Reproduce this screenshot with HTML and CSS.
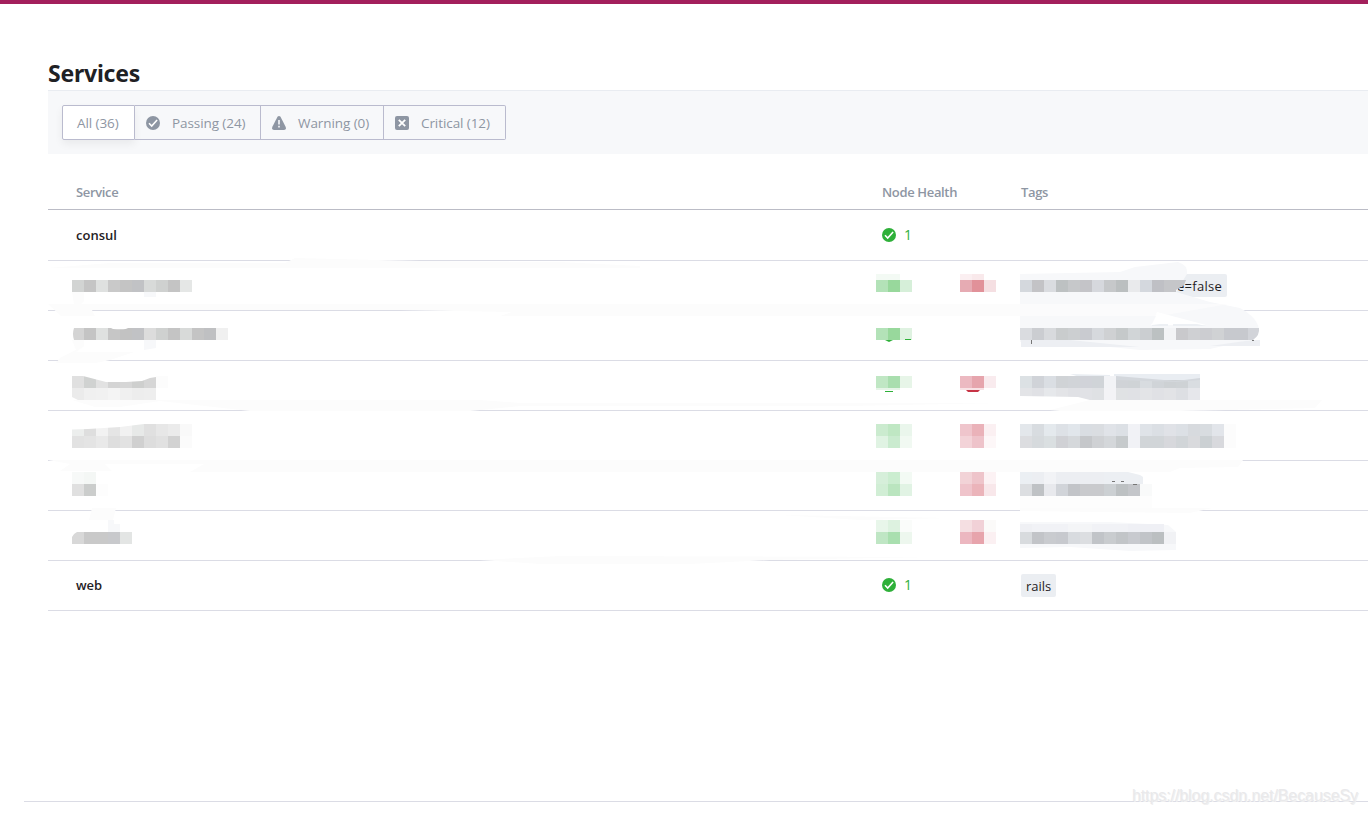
FILE: index.html
```
<!DOCTYPE html>
<html lang="en">
<head>
<meta charset="utf-8">
<title>Services</title>
<link rel="stylesheet" href="styles.css">
</head>
<body>
<svg class="symbols" aria-hidden="true">
  <symbol id="check" viewBox="0 0 14 14"><circle cx="7" cy="7" r="7" fill="currentColor"/><path d="M3 7.2l2.7 2.8 5.4-6" fill="none" stroke="#fff" stroke-width="1.6"/></symbol>
  <symbol id="warn" viewBox="0 0 14 14"><path d="M5.500.8Q7-.8 8.500.8L13.600 10.800Q14.600 14 12 14H2Q-.6 14 .4 10.800Z" fill="currentColor"/><path d="M7 4v4.500M7 9.800v1.700" stroke="#f7f8fa" stroke-width="1.6"/></symbol>
  <symbol id="cross" viewBox="0 0 14 14"><rect width="14" height="14" rx="2" fill="currentColor"/><path d="M3.8 3.8l6.4 6.4M10.2 3.8l-6.4 6.4" stroke="#fff" stroke-width="1.8"/></symbol>
</svg>
<main class="page">
  <h1 class="title"><span>Services</span></h1>
  <div class="filters">
    <div class="group">
      <button class="filter all"><span>All (36)</span></button>
      <button class="filter passing"><svg class="icon"><use href="#check"/></svg><span>Passing (24)</span></button>
      <button class="filter warning"><svg class="icon"><use href="#warn"/></svg><span>Warning (0)</span></button>
      <button class="filter critical"><svg class="icon"><use href="#cross"/></svg><span>Critical (12)</span></button>
    </div>
  </div>
  <div class="table">
    <div class="row head"><span><b>Service</b></span><span><b>Node Health</b></span><span><b>Tags</b></span></div>
    <div class="row first"><span class="name"><b>consul</b></span><span class="health"><svg class="icon"><use href="#check"/></svg>1</span><span></span></div>
    <div class="row"><span></span><span></span><span class="cut"><i class="tag cut-tag">e=false</i></span></div>
    <div class="row"></div>
    <div class="row"></div>
    <div class="row"></div>
    <div class="row"></div>
    <div class="row"></div>
    <div class="row last"><span class="name"><b>web</b></span><span class="health"><svg class="icon"><use href="#check"/></svg>1</span><span><i class="tag rails">rails</i></span></div>
  </div>
  <footer class="footer"></footer>
</main>
<svg class="redaction" viewBox="0 0 1368 814" aria-hidden="true">
  <g fill="#fcfcfc">
    <path d="M48 268L110 263H285L295 258 420 261 560 262 640 266V268Z"/>
    <path d="M72 292H84V301L81 304H1020V316H500L512 312 400 310H92L95 316H61L48 304H74Z"/>
    <path d="M84 340V346L76 352H134L110 360 96 363H56L60 358 76 350 72 340Z"/>
    <path d="M72 400H480L520 403H1000L850 406H520L470 411 250 411 160 401 120 407H95L72 400Z"/>
    <path d="M48 460H1243L1238 467 1180 468 1170 472H190L204 464H105L112 471H60L70 464Z"/>
    <path d="M92 508H116L113 520H89Z"/>
    <path d="M780 515L950 518 860 520Z"/>
    <path d="M480 560L560 556 930 557 770 560 690 564H540Z"/>
    <path d="M1050 410L1090 400H1322L1315 408 1180 411H1060Z"/>
    <path d="M1020 508H1212L1190 513 1100 512 1020 511Z"/>
  </g>
  <g fill="#f7f8fa">
    <path d="M1020 274L1120 272 1135 267 1178 262Q1188 265 1187 274L1176 292 1210 302 1240 308Q1258 318 1259 330L1252 340 1020 340Z"/>
    <path d="M1020 340H1250L1210 349 1140 350 1090 345 1020 342Z"/>
    <path d="M1020 522L1110 522 1168 525 1176 532V550L1130 551 1070 547 1020 548Z"/>
    <path d="M1020 496H1152V508H1020Z" fill="#fdfdfd"/>
    <path d="M144 292h12v5h-12zM144 340h12v8l-12 2zM108 520h6v4h6v8h-12z"/>
  </g>
  <path d="M1020 304H1228L1160 316H1020Z" fill="#fbfbfc"/>
  <path d="M1157 312L1206 325H1020V324H1152Z" fill="#fff"/>
  <path d="M1020 316H1156L1151 325 1147 328H1020Z" fill="#f7f8fa"/>
  <path d="M1021 340H1070L1140 347H1021ZM1252 330H1260V346H1210L1252 340Z" fill="#edeff3"/>
  <path d="M1031.500 340v4M1252 340.500h2" stroke="#777" stroke-width="1"/>
  <path d="M1152 325l8-1h8v2h-16zM1173 324h24l9 2h-33z" fill="#edf0f4"/>
  <path d="M885 340h8l-4 2z" fill="#2eb039"/>
  <path d="M885 391h8v1h-8z" fill="#2eb039"/>
  <path d="M876 388h24v2h-24z" fill="#e6f4e7"/><path d="M960 388h24v2h-24z" fill="#f8e2e5"/>
  <path d="M966 390h14l-2 2h-10z" fill="#c73445"/>
  <path d="M1114 374h86v6l-24 2-62-5zM1070 374l40 1v2h-30z" fill="#e9edf2"/>
  <path d="M1104 472h24l12 3 3 2v8h-39z" fill="#eceff3"/>
  <g id="mosaic" shape-rendering="crispEdges"></g>
  <path d="M905 339h6v1h-6z" fill="#2eb039"/>
  <path d="M1116 376l24 2 36 3 24-3v2l-24 2-60 -2z" fill="#d3d7dc"/>
  <path d="M1176 280h10l-2 5-8 5z" fill="#c5c6c9"/>
  <g fill="#fff">
    <path d="M72 328h2q-2 6 0 12h-2zM111 328h17q-2 2-15 1zM83 376h73v1l-6 1-8 3-16 1H106zM72 424h72l-24 3-32 2-16 .5zM72 532h5q-4 2-5 5z"/>
    <path d="M72 397l6 3h-6zM1020 396l58 1 12 3h-70z"/>
    <path d="M1260 328h-1q1 7-6 12h7z"/>
  </g>
  <path d="M1112 481.500h3M1121 481.500h3M1133 484.500h4" stroke="#777" stroke-width="1"/>
</svg>
<div class="watermark">https://blog.csdn.net/BecauseSy</div>
<script src="mosaic.js"></script>
</body>
</html>
```
FILE: styles.css
```
body { margin: 0; background: #fff; font: 13px "Open Sans", "Noto Sans", sans-serif; color: #1f2124; overflow: hidden; }
.page { height: 814px; box-sizing: border-box; border-top: 4px solid #a3205c; padding: 52px 0 0 48px; display: flex; flex-direction: column; }
.symbols { display: none; }
.title { margin: 0; height: 34px; font: bold 23px/35px "Noto Sans", sans-serif; letter-spacing: -.22px; }
.filters { height: 64px; box-sizing: border-box; border-top: 1px solid #e9ecf1; background: #f7f8fa; padding: 14px; }
.group { display: flex; }
.filter { box-sizing: border-box; height: 35px; margin: 0; padding: 0 0 0 11px; border: 1px solid #babbce; border-left: 0; background: none; color: #8e96a3; font: 13.5px/33px "Open Sans", sans-serif; letter-spacing: -.08px; display: flex; align-items: center; white-space: nowrap; gap: 12px; }
.filter span { padding-top: 1px; }
.all { width: 73px; border-left: 1px solid #babbce; border-radius: 2px 0 0 2px; background: #fff; padding-left: 14px; box-shadow: 0 4px 8px rgba(0,0,0,.06); }
.passing { width: 126px; }
.warning { width: 123px; }
.critical { width: 122px; border-radius: 0 2px 2px 0; }
.icon { width: 14px; height: 14px; flex: none; }
.table { padding-top: 20px; }
.row { height: 50px; box-sizing: border-box; border-bottom: 1px solid #dbdce5; display: grid; grid-template-columns: 806px 139px 1fr; padding-left: 28px; align-items: center; }
.row b { font-weight: 600; }
.head { height: 36px; border-color: #bbbcc6; color: #8e96a3; padding-top: 1px; letter-spacing: -.35px; }
.first { height: 51px; }
.last { padding-bottom: 1px; }
.health { display: flex; align-items: center; gap: 8px; color: #2eb039; font-size: 14px; line-height: 18px; }
.tag { display: inline-block; box-sizing: border-box; height: 23px; padding: 0 5px; font-style: normal; line-height: 24px; background: #ebeef2; border-radius: 2px; position: relative; top: 1px; }
.cut { padding: 0 0 2px 151px; }
.rails { width: 35px; top: 0; }
.cut-tag { width: 55px; letter-spacing: .3px; }
.footer { border-top: 1px solid #dbdce5; margin: 190px 0 0 -24px; }
.redaction { position: absolute; left: 0; top: 0; width: 1368px; height: 814px; }
.watermark { position: absolute; right: 10px; bottom: 9px; font: 16px/18px "Liberation Sans", sans-serif; letter-spacing: -.08px; color: #e9e9eb; text-shadow: 1px 1px 0 #f0f0f0; }
```
FILE: mosaic.js
```
// Each strip: x, y, height, then one colour per 12px cell.
const strips = [
  "72 280 12 d2d4d3 c5c5c5 dfe1e0 c9c9c9 c4c4c4 c1c2c5 d8dad9 cfd1d0 c4c4c4 e5e7e6",
  "72 328 12 d4d4d4 c4c4c4 dfe1e0 c6c6c6 c2c2c2 c1c2c5 dcdcdc cfd1d0 c4c4c4 d8dad9 c4c4c4 bfc0c2 f0f0f0",
  "72 376 12 e0e0e0 d0d2d1 e2e2e2 d4d4d4 d6d6d6 cecfce d6d6d6 fcfcfc",
  "72 388 12 ebebeb f0f0f0 f1f1f1 f4f4f4 f0f0f0 ededed eeeeee",
  "72 424 12 eceeed dedede f2f2f2 e5e5e5 f1f1f1 e7e9e8 e0e0e0 e7e7e7 ebebeb f9f9f9",
  "72 436 12 e2e2e2 e4e4e4 e9e9e9 dedede e2e2e2 d0d0d0 dddddd e1e1e1 d2d2d2 fbfbfb",
  "72 472 12 f7f9f8 f4f7f5",
  "72 484 12 e0e0e0 cbcdcc fdfdfd",
  "72 532 12 d8d8d8 c9c9c9 c9c9c9 c8c9cc e3e5e4",
  "876 274 6 f3faf4 f3faf4",
  "876 280 12 b3e2b8 98d89c d6efd9",
  "876 328 12 b3e2b8 98d89c dff2e1",
  "876 376 12 c0e7c4 a9deae e7f5e8",
  "876 424 12 cbebcf bfe7c3 eaf6ec",
  "876 436 12 e0f3e3 caebcf f1f9f2",
  "876 472 12 d6efda cbedd0 f3faf4",
  "876 484 12 d1eed5 bae5bf e1f3e4",
  "876 520 12 e8f6ea ddf2e0 fafcfa",
  "876 532 12 bfe6c4 a9dfaf edf7ee",
  "960 274 6 fbeff1 f9e9eb",
  "960 280 12 e6abb3 e19199 f5dfe2",
  "960 376 12 ecb9c1 e6a5ad f9ebee",
  "960 424 12 efc5cc eab2b9 fbf0f2",
  "960 436 12 f3d3d8 eec3ca fdf7f8",
  "960 472 12 f2d3d7 eec4ca fcf2f4",
  "960 484 12 efc4cb ebb4ba f8e7ea",
  "960 520 12 f5dfe2 f1d1d7 fbfaf9",
  "960 532 12 ecb7c0 e7a4ac fbf0f2",
  "1020 280 12 d4d8dd c3c3c6 dadce0 bdc1c2 c6c8ca c4c4c8 d6d8dd c6c8ca bbbfc0 e9eaec d4d8de bfc0c5 c5c6c9",
  "1020 328 12 dadce0 cbcdd1 d8dadd c9cccd cccfd1 c9cbd0 d6d9dd cfd1d3 c5c9ca d1d5d7 cbced1 bcc1c2 f3f4f6 c9c9cc cfd0d3 cccdd1 d0d2d4 c7c9ce c7c9ce d2d4d9",
  "1020 376 12 dce1e4 d0d3d8 dadee3 d0d3d6 d1d4d8 d1d3d9 d0d4d8 f2f3f6",
  "1116 380 8 d0d3d7 cfd3d6 d8dce0 d0d4d8 cdd1d4 ced2d5 d9dde1",
  "1020 388 12 e3e4e7 e0e1e5 e6e8eb e3e4e7 e0e1e5 e1e2e6 dfe1e4 f3f3f6 e0e2e4 e0e1e5 e3e4e7 e0e1e5 e2e3e6 dddfe3 e6e7eb",
  "1020 424 12 e3e7eb d8dce0 e4e9ed dde1e6 e1e6eb d9dde2 dadde1 e0e3e8 dce0e5 f1f2f6 dfe3e8 dbdfe4 e0e2e7 dce0e5 d7dade d8dce0 e2e5ea fcfcfc",
  "1020 436 12 dcdde0 d6dadd dadfe1 d0d1d5 d5d8db c5c7ca cfd1d4 d4d7da c6cacc f1f2f6 d1d5d8 d1d5d8 d7d8dc d1d5d8 d9dadd cbd0d3 d8d9dd fcfcfc",
  "1020 472 12 ebeff3 eceef2 f2f3f6 eceef2 eceef2 eceef2 eceef2",
  "1020 484 12 dcdee1 bfc2c5 e8e9ed d1d4d9 c2c4c8 c9cacd c9cacd ccd0d3 bdc1c3 c4c6ca f9fafa",
  "1020 524 8 eff0f4 f1f2f6 f1f2f6 f1f2f6 f4f5f7 f4f5f7 f1f2f6 f1f2f6 f1f2f6 eff0f5 eff0f5 eff0f5",
  "1020 532 12 d8dbde c2c4c8 c9cbcf c7c9ce d8dbdf dcdee1 c1c4c8 c9cccf c2c5c8 c8cacf c1c4c8 bbbfc1 f1f2f5"
];
const layer = document.getElementById("mosaic");
for (const strip of strips) {
  const [x, y, h, ...cells] = strip.split(" ");
  cells.forEach((colour, i) => {
    const r = document.createElementNS("http://www.w3.org/2000/svg", "rect");
    r.setAttribute("x", +x + i * 12);
    r.setAttribute("y", y);
    r.setAttribute("width", 12);
    r.setAttribute("height", h);
    r.setAttribute("fill", "#" + colour);
    layer.append(r);
  });
}
```
